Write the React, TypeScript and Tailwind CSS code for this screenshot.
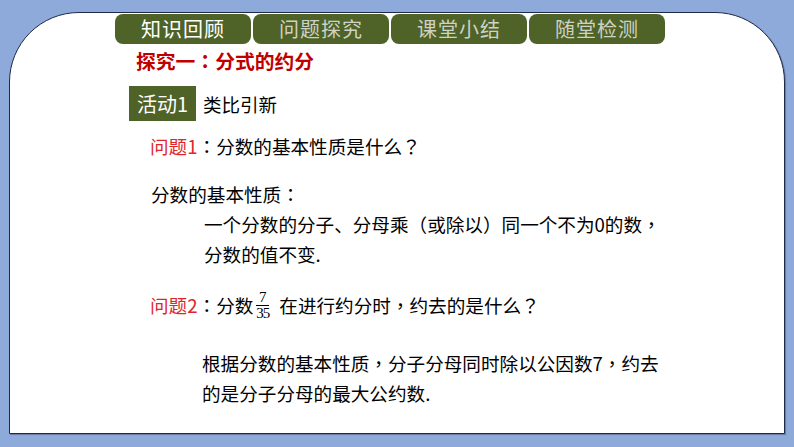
import React from "react";

const font = { fontFamily: '"Noto Sans CJK SC", "Noto Sans", sans-serif' };
const tcFont = { fontFamily: '"Noto Sans CJK TC", "Noto Sans CJK SC", sans-serif' };

function T({ s }: { s: string }) {
  const parts = s.split(/([：，？（）])/);
  return (
    <>
      {parts.map((p, i) =>
        /^[：，？（）]$/.test(p) ? (
          <span key={i} style={tcFont}>
            {p}
          </span>
        ) : (
          <React.Fragment key={i}>{p}</React.Fragment>
        )
      )}
    </>
  );
}

function Tab({ label, active }: { label: string; active?: boolean }) {
  return (
    <div
      className={`flex h-[30px] w-[136px] items-center justify-center rounded-[8px] bg-[#4f6228] text-[20px] tracking-[1px] ${
        active ? "text-white" : "text-[#cdd2c4]"
      }`}
    >
      {label}
    </div>
  );
}

export default function App() {
  return (
    <div
      className="h-[447px] w-[794px] bg-[#8eaadb] pl-[9px] pr-[9px] pt-[12px] pb-[13px]"
      style={font}
    >
      <div className="h-full w-full rounded-tl-[70px] rounded-tr-[70px] border-[1.5px] border-[#1f2a44] bg-white text-black shadow-[1px_1px_1px_rgba(40,50,80,0.4)]">
        <div className="flex gap-[2px] pl-[105px] pt-[1px]">
          <Tab label="知识回顾" active />
          <Tab label="问题探究" />
          <Tab label="课堂小结" />
          <Tab label="随堂检测" />
        </div>

        <div className="ml-[126px] mt-[4px] h-[26px] text-[19.8px] font-bold leading-[26px] text-[#c00000]">
          <T s="探究一：分式的约分" />
        </div>

        <div className="ml-[119px] mt-[12px] flex items-center">
          <div className="flex h-[35px] w-[67px] items-center justify-center bg-[#4f6228] text-[20px] text-white">
            活动1
          </div>
          <div className="ml-[7px] text-[18.5px] leading-[26px]">类比引新</div>
        </div>

        <div className="ml-[140px] mt-[11px] h-[28px] text-[18.6px] leading-[28px]">
          <span className="text-[#e0262a]">问题1</span>
          <T s="：分数的基本性质是什么？" />
        </div>

        <div className="ml-[141px] mt-[20px] h-[28px] text-[18.6px] leading-[28px]">
          <T s="分数的基本性质：" />
        </div>

        <div className="ml-[194px] mt-[1px] text-[18.6px] leading-[30px]">
          <div>
            <T s="一个分数的分子、分母乘（或除以）同一个不为0的数，" />
          </div>
          <div>分数的值不变.</div>
        </div>

        <div className="ml-[140px] mt-[22px] flex h-[28px] items-center text-[18.6px] leading-[28px]">
          <span className="text-[#e0262a]">问题2</span>
          <span>
            <T s="：分数" />
          </span>
          <span
            className="ml-[3px] inline-flex flex-col items-center text-[15px] leading-[13px]"
            style={{ fontFamily: '"Liberation Serif", serif' }}
          >
            <span>7</span>
            <span className="mt-[1px] border-t border-black pt-[1px] tracking-[-1px]">35</span>
          </span>
          <span className="ml-[10px]">
            <T s="在进行约分时，约去的是什么？" />
          </span>
        </div>

        <div className="ml-[192px] mt-[29px] text-[18.6px] leading-[30px]">
          <div>
            <T s="根据分数的基本性质，分子分母同时除以公因数7，约去" />
          </div>
          <div>的是分子分母的最大公约数.</div>
        </div>
      </div>
    </div>
  );
}
